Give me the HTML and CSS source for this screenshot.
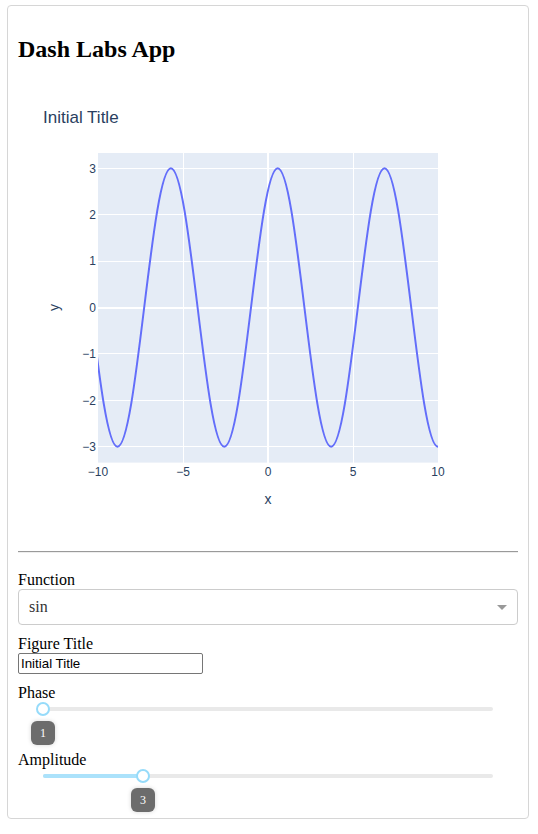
FILE: index.html
```html
<!DOCTYPE html>
<html>
<head>
<meta charset="utf-8">
<title>Dash Labs App</title>
<link rel="stylesheet" href="styles.css">
</head>
<body>
<div class="card">
  <h2 class="app-title">Dash Labs App</h2>
  <svg class="graph" width="500" height="460" viewBox="18 83 500 460" xmlns="http://www.w3.org/2000/svg">
    <defs>
      <clipPath id="plotclip"><rect x="98" y="153" width="340" height="309.6"/></clipPath>
    </defs>
    <rect class="plot-bg" x="98" y="153" width="340" height="309.6"/>
    <g class="grid">
      <line x1="183" y1="153" x2="183" y2="462.6"/>
      <line x1="353" y1="153" x2="353" y2="462.6"/>
      <line x1="98" y1="168.3" x2="438" y2="168.3"/>
      <line x1="98" y1="214.7" x2="438" y2="214.7"/>
      <line x1="98" y1="261.1" x2="438" y2="261.1"/>
      <line x1="98" y1="353.9" x2="438" y2="353.9"/>
      <line x1="98" y1="400.3" x2="438" y2="400.3"/>
      <line x1="98" y1="446.7" x2="438" y2="446.7"/>
    </g>
    <g class="zero">
      <line x1="268" y1="153" x2="268" y2="462.6"/>
      <line x1="98" y1="307.5" x2="438" y2="307.5"/>
    </g>
    <path class="trace" clip-path="url(#plotclip)" d="M 90.78 307.5 C 99.49 378.81, 107.82 446.7, 117.48 446.7 C 127.15 446.7, 135.48 378.81, 144.19 307.5 C 152.90 236.19, 161.23 168.3, 170.89 168.3 C 180.56 168.3, 188.89 236.19, 197.60 307.5 C 206.30 378.81, 214.63 446.7, 224.30 446.7 C 233.96 446.7, 242.29 378.81, 251.00 307.5 C 259.71 236.19, 268.04 168.3, 277.71 168.3 C 287.37 168.3, 295.70 236.19, 304.41 307.5 C 313.12 378.81, 321.45 446.7, 331.12 446.7 C 340.78 446.7, 349.11 378.81, 357.82 307.5 C 366.53 236.19, 374.86 168.3, 384.52 168.3 C 394.19 168.3, 402.52 236.19, 411.23 307.5 C 419.94 378.81, 428.27 446.7, 437.93 446.7 C 447.60 446.7, 455.93 378.81, 464.64 307.5"/>
    <g class="ytick">
      <text x="96" y="172.6">3</text>
      <text x="96" y="219">2</text>
      <text x="96" y="265.4">1</text>
      <text x="96" y="311.8">0</text>
      <text x="96" y="358.2">−1</text>
      <text x="96" y="404.6">−2</text>
      <text x="96" y="451">−3</text>
    </g>
    <g class="xtick">
      <text x="98" y="476">−10</text>
      <text x="183" y="476">−5</text>
      <text x="268" y="476">0</text>
      <text x="353" y="476">5</text>
      <text x="438" y="476">10</text>
    </g>
    <text class="axis-title" x="268" y="503.5">x</text>
    <text class="axis-title" transform="translate(58.5 307.5) rotate(-90)" x="0" y="0">y</text>
    <text class="plot-title" x="43" y="123">Initial Title</text>
  </svg>
  <hr class="divider">
  <div class="controls">
    <div class="field">
      <label class="field-label">Function</label>
      <div class="select">
        <span class="select-value">sin</span>
        <span class="select-arrow-zone"><span class="select-arrow"></span></span>
      </div>
    </div>
    <div class="field">
      <label class="field-label">Figure Title</label>
      <input class="text-input" type="text" value="Initial Title">
    </div>
    <div class="field">
      <label class="field-label">Phase</label>
      <div class="slider-wrap">
        <div class="slider">
          <div class="rail"></div>
          <div class="handle" style="left:0%"></div>
          <div class="tip" style="left:0%">1</div>
        </div>
      </div>
    </div>
    <div class="field">
      <label class="field-label">Amplitude</label>
      <div class="slider-wrap">
        <div class="slider">
          <div class="rail"></div>
          <div class="track" style="width:22.222%"></div>
          <div class="handle" style="left:22.222%"></div>
          <div class="tip" style="left:22.222%">3</div>
        </div>
      </div>
    </div>
  </div>
</div>
</body>
</html>
```

FILE: styles.css
```css
html, body {
  margin: 0;
  padding: 0;
  background: #fff;
}
body {
  font-family: "Liberation Serif", "Times New Roman", serif;
  font-size: 16px;
  color: #000;
}
.card {
  box-sizing: border-box;
  width: 522px;
  margin: 5px 0 0 7px;
  padding: 10px;
  border: 1px solid #d6d6d6;
  border-radius: 4px;
}
.app-title {
  margin: 20px 0;
  font-size: 24px;
  line-height: 27px;
  font-weight: bold;
}
.graph {
  display: block;
}
.plot-bg { fill: #e5ecf6; }
.grid line {
  stroke: #fff;
  stroke-width: 1;
  shape-rendering: crispEdges;
}
.zero line {
  stroke: #fff;
  stroke-width: 2;
  shape-rendering: crispEdges;
}
.trace {
  fill: none;
  stroke: #636efa;
  stroke-width: 2;
  stroke-linejoin: round;
}
.ytick text, .xtick text, .axis-title, .plot-title {
  font-family: "Liberation Sans", Arial, sans-serif;
  fill: #2a3f5f;
}
.ytick text {
  font-size: 12px;
  text-anchor: end;
}
.xtick text {
  font-size: 12px;
  text-anchor: middle;
}
.axis-title {
  font-size: 14px;
  text-anchor: middle;
}
.plot-title {
  font-size: 17px;
}
.divider {
  margin: 8px 0;
  height: 0;
  border: 0;
  border-top: 1px solid #9a9a9a;
  border-bottom: 1px solid #eeeeee;
}
.controls {
  margin-top: 18px;
  display: flex;
  flex-direction: column;
  gap: 10px;
}
.field-label {
  display: block;
  line-height: 18px;
}
.select {
  box-sizing: border-box;
  height: 36px;
  border: 1px solid #ccc;
  border-radius: 4px;
  display: flex;
  align-items: center;
  background: #fff;
}
.select-value {
  flex: 1;
  padding-left: 10px;
  color: #333;
  line-height: 34px;
}
.select-arrow-zone {
  width: 25px;
  padding-right: 5px;
  box-sizing: border-box;
  display: flex;
  justify-content: center;
  align-items: center;
}
.select-arrow {
  width: 0;
  height: 0;
  border-style: solid;
  border-color: #999 transparent transparent;
  border-width: 5px 5px 2.5px;
  margin-top: 2px;
}
.text-input {
  display: block;
  box-sizing: border-box;
  width: 185px;
  height: 21px;
  margin: 0;
  padding: 1px 2px;
  border: 1px solid #767676;
  border-radius: 2px;
  font-family: "Liberation Sans", Arial, sans-serif;
  font-size: 13.333px;
  color: #000;
}
.slider-wrap {
  padding: 0 25px 25px;
}
.slider {
  position: relative;
  box-sizing: border-box;
  height: 14px;
  padding: 5px 0;
}
.rail {
  height: 4px;
  background: #e9e9e9;
  border-radius: 6px;
}
.track {
  position: absolute;
  left: 0;
  top: 5px;
  height: 4px;
  background: #abe2fb;
  border-radius: 6px;
}
.handle {
  position: absolute;
  top: 0;
  box-sizing: border-box;
  width: 14px;
  height: 14px;
  margin-left: -7px;
  border: 2px solid #96dbfa;
  border-radius: 50%;
  background: #fff;
}
.tip {
  position: absolute;
  top: 19px;
  box-sizing: border-box;
  width: 24px;
  height: 24px;
  margin-left: -12px;
  background: #6c6c6c;
  color: #fff;
  border-radius: 6px;
  box-shadow: 0 0 4px rgba(0, 0, 0, 0.17);
  font-size: 12px;
  line-height: 24px;
  text-align: center;
}
```
